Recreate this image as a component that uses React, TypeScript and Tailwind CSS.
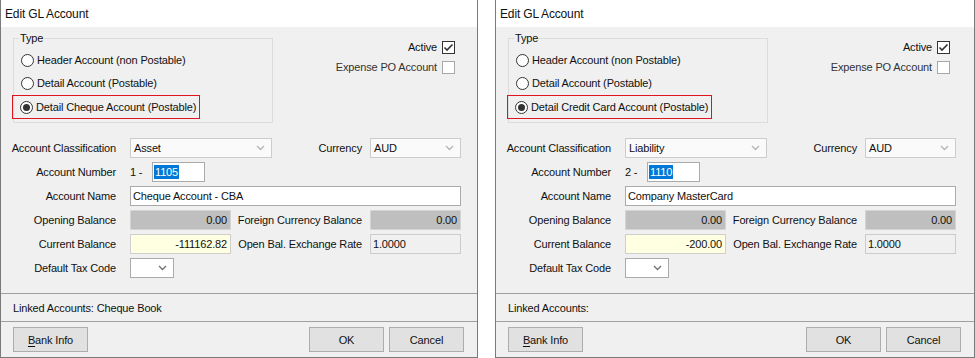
import React from 'react';

type DialogData = {
  width: string;
  typeLabel: string;
  classification: string;
  prefix: string;
  number: string;
  name: string;
  current: string;
  linked: string;
};

const DIALOGS: DialogData[] = [
  {
    width: 'w-[478px]',
    typeLabel: 'Detail Cheque Account (Postable)',
    classification: 'Asset',
    prefix: '1 -',
    number: '1105',
    name: 'Cheque Account - CBA',
    current: '-111162.82',
    linked: 'Linked Accounts: Cheque Book',
  },
  {
    width: 'w-[480px]',
    typeLabel: 'Detail Credit Card Account (Postable)',
    classification: 'Liability',
    prefix: '2 -',
    number: '1110',
    name: 'Company MasterCard',
    current: '-200.00',
    linked: 'Linked Accounts:',
  },
];

function Chevron({ dark }: { dark?: boolean }) {
  return (
    <svg width="9" height="6" viewBox="0 0 9 6" className="shrink-0">
      <polyline points="1,1 4.5,4.5 8,1" fill="none" stroke={dark ? '#707070' : '#b4b4b4'} strokeWidth="1.3" />
    </svg>
  );
}

function Radio({ checked, label }: { checked?: boolean; label: string }) {
  return (
    <div className="flex h-[22px] items-center">
      <span className="flex h-[13px] w-[13px] items-center justify-center rounded-full border border-[#333] bg-white">
        {checked && <span className="h-[7px] w-[7px] rounded-full bg-[#333]" />}
      </span>
      <span className="ml-[3px] whitespace-nowrap">{label}</span>
    </div>
  );
}

function Combo({ value, className, dark }: { value?: string; className: string; dark?: boolean }) {
  return (
    <div className={`flex h-[20px] shrink-0 items-center justify-between border pl-[3px] pr-[6px] ${className}`}>
      <span>{value}</span>
      <Chevron dark={dark} />
    </div>
  );
}

function Label({ children, className }: { children: React.ReactNode; className: string }) {
  return <div className={`flex shrink-0 justify-end whitespace-nowrap ${className}`}>{children}</div>;
}

function Dialog({ d }: { d: DialogData }) {
  return (
    <div className={`${d.width} flex h-[358px] shrink-0 flex-col border-x border-b border-[#7a7a7a] bg-[#f0f0f0]`}>
      <div className="flex h-[27px] items-center bg-white pl-[4px] text-[12px]">Edit GL Account</div>

      <div className="h-[266px]">
        <div className="flex pt-[11px]">
          <div className="relative ml-[12px] h-[85px] w-[260px] shrink-0 border border-[#dcdcdc] pl-[7px] pt-[10px]">
            <span className="absolute -top-[8px] left-[5px] bg-[#f0f0f0] px-[1px] leading-[14px]">Type</span>
            <div className="flex flex-col gap-[1px]">
              <Radio label="Header Account (non Postable)" />
              <Radio label="Detail Account (Postable)" />
              <div className="-ml-[9px] w-fit border border-[#e0141e] pl-[7px] pr-[3px]">
                <Radio checked label={d.typeLabel} />
              </div>
            </div>
          </div>

          <div className="flex w-[182px] shrink-0 flex-col items-end gap-[6px] pt-[2px]">
            <div className="flex items-center gap-[5px]">
              <span>Active</span>
              <span className="flex h-[13px] w-[13px] items-center justify-center border border-[#333] bg-white">
                <svg width="11" height="11" viewBox="0 0 11 11">
                  <path d="M1.5 5.5 L4 8 L9.5 2.5" fill="none" stroke="#333" strokeWidth="1.6" />
                </svg>
              </span>
            </div>
            <div className="flex items-center gap-[5px] text-[#333]">
              <span>Expense PO Account</span>
              <span className="h-[13px] w-[13px] border border-[#a8a8a8] bg-white" />
            </div>
          </div>
        </div>

        <div className="mt-[15px] flex flex-col gap-[4px] pl-[12px]">
          <div className="flex h-[20px] items-center">
            <Label className="w-[103px]">Account Classification</Label>
            <Combo value={d.classification} className="ml-[14px] w-[142px] border-[#cccccc] bg-[#fafafa]" />
            <Label className="w-[90px]">Currency</Label>
            <Combo value="AUD" className="ml-[8px] w-[91px] border-[#cccccc] bg-[#fafafa]" />
          </div>

          <div className="flex h-[20px] items-center">
            <Label className="w-[103px]">Account Number</Label>
            <span className="ml-[14px] w-[22px]">{d.prefix}</span>
            <div className="flex h-[20px] w-[53px] items-center border border-[#ababab] bg-white pl-[1px]">
              <span className="bg-[#0078d7] px-[1px] leading-[14px] text-white">{d.number}</span>
            </div>
          </div>

          <div className="flex h-[20px] items-center">
            <Label className="w-[103px]">Account Name</Label>
            <div className="ml-[14px] flex h-[20px] w-[331px] items-center border border-[#ababab] bg-white pl-[2px]">
              {d.name}
            </div>
          </div>

          <div className="flex h-[20px] items-center">
            <Label className="w-[103px]">Opening Balance</Label>
            <div className="ml-[14px] flex h-[20px] w-[101px] shrink-0 items-center justify-end border border-[#d4d4d4] bg-[#bfbfbf] pr-[3px]">
              0.00
            </div>
            <Label className="w-[131px]">Foreign Currency Balance</Label>
            <div className="ml-[8px] flex h-[20px] w-[91px] shrink-0 items-center justify-end border border-[#d4d4d4] bg-[#bfbfbf] pr-[3px]">
              0.00
            </div>
          </div>

          <div className="flex h-[20px] items-center">
            <Label className="w-[103px]">Current Balance</Label>
            <div className="ml-[14px] flex h-[20px] w-[101px] shrink-0 items-center justify-end border border-[#cfcfcf] bg-[#ffffe1] pr-[3px]">
              {d.current}
            </div>
            <Label className="w-[131px]">Open Bal. Exchange Rate</Label>
            <div className="ml-[8px] flex h-[20px] w-[91px] shrink-0 items-center border border-[#cccccc] bg-[#f0f0f0] pl-[2px]">
              1.0000
            </div>
          </div>

          <div className="flex h-[20px] items-center">
            <Label className="w-[103px]">Default Tax Code</Label>
            <Combo dark className="ml-[14px] w-[44px] border-[#ababab] bg-white" />
          </div>
        </div>
      </div>

      <div className="h-px bg-[#a0a0a0]" />
      <div className="flex h-[27px] items-center pl-[12px]">{d.linked}</div>
      <div className="h-px bg-[#a0a0a0]" />

      <div className="flex h-[35px] items-start justify-between pl-[12px] pr-[13px] pt-[5px]">
        <button className="h-[25px] w-[75px] border border-[#adadad] bg-[#e1e1e1]">
          <span className="underline underline-offset-2">B</span>ank Info
        </button>
        <div className="flex gap-[5px]">
          <button className="h-[25px] w-[75px] border border-[#adadad] bg-[#e1e1e1]">OK</button>
          <button className="h-[25px] w-[75px] border border-[#adadad] bg-[#e1e1e1]">Cancel</button>
        </div>
      </div>
    </div>
  );
}

export default function App() {
  return (
    <div className="flex h-[358px] w-[975px] gap-[17px] overflow-hidden bg-white font-['Liberation_Sans',Arial,sans-serif] text-[11px] leading-[14px] tracking-[-0.15px] text-[#111]">
      {DIALOGS.map((d) => (
        <Dialog key={d.number} d={d} />
      ))}
    </div>
  );
}
